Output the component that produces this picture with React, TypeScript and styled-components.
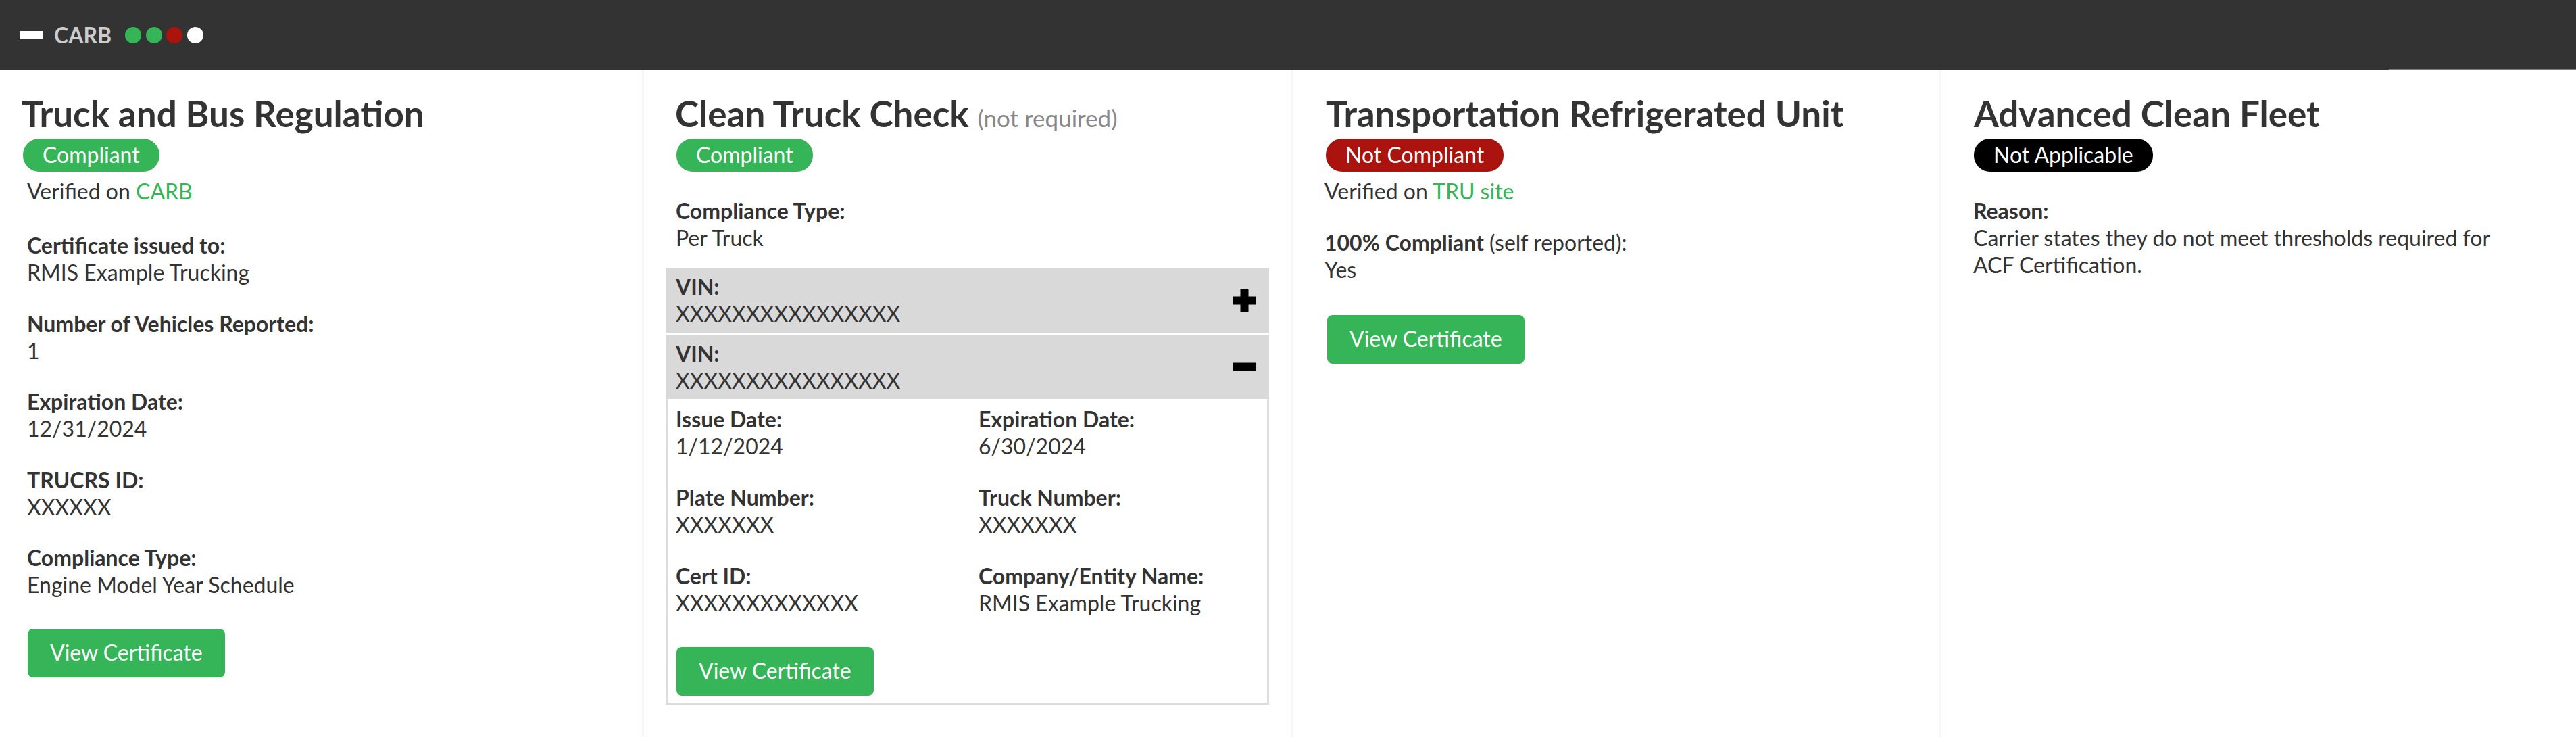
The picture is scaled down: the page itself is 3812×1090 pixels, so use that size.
import React from "react";
import styled, { createGlobalStyle } from "styled-components";

const GREEN = "#35b558";
const RED = "#ab130e";

const GlobalStyle = createGlobalStyle`
  html, body {
    margin: 0;
    background: #fff;
    color: #333;
    font-family: Lato, "Open Sans", sans-serif;
    font-size: 32px;
    line-height: 40px;
  }
  * { box-sizing: border-box; }
`;

const Page = styled.div`
  width: 3812px;
  height: 1090px;
  overflow: hidden;
`;

const TopBar = styled.header`
  position: relative;
  height: 103px;
  background: #333;
  display: flex;
  align-items: center;
  padding-left: 29px;
  color: #ccc;

  &::after {
    content: "";
    position: absolute;
    right: 0;
    bottom: 0;
    width: 277px;
    height: 1px;
    background: #7d7d7d;
  }
`;

const Dash = styled.span`
  width: 35px;
  height: 12px;
  background: #fff;
  margin-right: 16px;
`;

const BarTitle = styled.span`
  font-weight: 700;
  width: 105px;
`;

const Dots = styled.div`
  display: flex;
  gap: 6.6px;
`;

const Dot = styled.span<{ $color: string }>`
  width: 24px;
  height: 24px;
  border-radius: 50%;
  background: ${(p) => p.$color};
`;

const Columns = styled.div`
  display: grid;
  grid-template-columns: 950px 961px 959px 942px;
  height: 987px;
`;

const Column = styled.section<{ $left: number; $first?: boolean }>`
  padding: 37px 40px 0 ${(p) => p.$left}px;
  border-left: ${(p) => (p.$first ? "none" : "3px solid #f7f7f7")};
`;

const Title = styled.h3<{ $shift: number }>`
  margin: 0 0 9px ${(p) => p.$shift}px;
  font-size: 53px;
  line-height: 56px;
  font-weight: 700;
  white-space: nowrap;
`;

const TitleNote = styled.small`
  font-size: 35px;
  line-height: 1;
  font-weight: 400;
  color: #888;
`;

const Pill = styled.span<{ $bg: string; $shift: number }>`
  display: block;
  width: fit-content;
  height: 49px;
  line-height: 47px;
  padding: 0 29px;
  margin-left: ${(p) => p.$shift}px;
  border-radius: 24px;
  color: #fff;
  background: ${(p) => p.$bg};
  white-space: nowrap;
`;

const Verified = styled.p`
  margin: 9px 0 0;
`;

const GreenLink = styled.a`
  color: ${GREEN};
`;

const Field = styled.div<{ $top: number }>`
  margin-top: ${(p) => p.$top}px;
`;

const Label = styled.strong`
  display: block;
  font-weight: 700;
`;

const InlineLabel = styled.strong`
  font-weight: 700;
`;

const Value = styled.span`
  display: block;
`;

const CertButton = styled.a<{ $top: number; $shift?: number }>`
  display: block;
  width: fit-content;
  height: 72px;
  line-height: 70px;
  padding: 0 33px;
  margin: ${(p) => p.$top}px 0 0 ${(p) => p.$shift ?? 0}px;
  border-radius: 8px;
  background: ${GREEN};
  color: #fff;
  white-space: nowrap;
`;

const Accordion = styled.div`
  margin: 24px 0 0 -15px;
  width: 893px;
`;

const AccordionHead = styled.div<{ $open?: boolean }>`
  display: flex;
  align-items: center;
  justify-content: space-between;
  height: ${(p) => (p.$open ? 95 : 96)}px;
  margin-bottom: ${(p) => (p.$open ? 0 : 3)}px;
  padding: 0 19px 0 15px;
  background: #d9d9d9;
`;

const AccordionBody = styled.div`
  border: 3px solid #ddd;
  border-top: none;
  padding: 10px 12px 0;
  height: 452px;
`;

const DetailGrid = styled.div`
  display: grid;
  grid-template-columns: 448px 1fr;
  row-gap: 36px;
`;

const ToggleIcon = styled.svg`
  width: 35px;
  height: 35px;
  fill: #000;
  flex: none;
`;

const PlusIcon = () => (
  <ToggleIcon viewBox="0 0 35 35">
    <path d="M11.5 0h12v11.5h11.5v12h-11.5v11.5h-12v-11.5H0v-12h11.5z" />
  </ToggleIcon>
);

const MinusIcon = () => (
  <ToggleIcon viewBox="0 0 35 35">
    <path d="M0 11.5h35v12H0z" />
  </ToggleIcon>
);

const details = [
  ["Issue Date:", "1/12/2024"],
  ["Expiration Date:", "6/30/2024"],
  ["Plate Number:", "XXXXXXX"],
  ["Truck Number:", "XXXXXXX"],
  ["Cert ID:", "XXXXXXXXXXXXX"],
  ["Company/Entity Name:", "RMIS Example Trucking"],
];

const App: React.FC = () => (
  <Page>
    <GlobalStyle />
    <TopBar>
      <Dash />
      <BarTitle>CARB</BarTitle>
      <Dots>
        <Dot $color={GREEN} />
        <Dot $color={GREEN} />
        <Dot $color={RED} />
        <Dot $color="#fff" />
      </Dots>
    </TopBar>
    <Columns>
      <Column $left={40} $first>
        <Title $shift={-8}>Truck and Bus Regulation</Title>
        <Pill $bg={GREEN} $shift={-6}>Compliant</Pill>
        <Verified>
          Verified on <GreenLink>CARB</GreenLink>
        </Verified>
        <Field $top={40}>
          <Label>Certificate issued to:</Label>
          <Value>RMIS Example Trucking</Value>
        </Field>
        <Field $top={35.5}>
          <Label>Number of Vehicles Reported:</Label>
          <Value>1</Value>
        </Field>
        <Field $top={35.5}>
          <Label>Expiration Date:</Label>
          <Value>12/31/2024</Value>
        </Field>
        <Field $top={35.5}>
          <Label>TRUCRS ID:</Label>
          <Value>XXXXXX</Value>
        </Field>
        <Field $top={35.5}>
          <Label>Compliance Type:</Label>
          <Value>Engine Model Year Schedule</Value>
        </Field>
        <CertButton $top={45} $shift={1}>View Certificate</CertButton>
      </Column>
      <Column $left={47}>
        <Title $shift={-1}>
          Clean Truck Check <TitleNote>(not required)</TitleNote>
        </Title>
        <Pill $bg={GREEN} $shift={1}>Compliant</Pill>
        <Field $top={38}>
          <Label>Compliance Type:</Label>
          <Value>Per Truck</Value>
        </Field>
        <Accordion>
          <AccordionHead>
            <div>
              <Label>VIN:</Label>
              <Value>XXXXXXXXXXXXXXXX</Value>
            </div>
            <PlusIcon />
          </AccordionHead>
          <AccordionHead $open>
            <div>
              <Label>VIN:</Label>
              <Value>XXXXXXXXXXXXXXXX</Value>
            </div>
            <MinusIcon />
          </AccordionHead>
          <AccordionBody>
            <DetailGrid>
              {details.map(([label, value]) => (
                <div key={label}>
                  <Label>{label}</Label>
                  <Value>{value}</Value>
                </div>
              ))}
            </DetailGrid>
            <CertButton $top={45} $shift={1}>View Certificate</CertButton>
          </AccordionBody>
        </Accordion>
      </Column>
      <Column $left={46}>
        <Title $shift={2}>Transportation Refrigerated Unit</Title>
        <Pill $bg={RED} $shift={2}>Not Compliant</Pill>
        <Verified>
          Verified on <GreenLink>TRU site</GreenLink>
        </Verified>
        <Field $top={36}>
          <InlineLabel>100% Compliant</InlineLabel> (self reported):
          <Value>Yes</Value>
        </Field>
        <CertButton $top={47} $shift={4}>View Certificate</CertButton>
      </Column>
      <Column $left={47}>
        <Title $shift={1}>Advanced Clean Fleet</Title>
        <Pill $bg="#000" $shift={1}>Not Applicable</Pill>
        <Field $top={38}>
          <Label>Reason:</Label>
          <Value>
            Carrier states they do not meet thresholds required for
            <br />
            ACF Certification.
          </Value>
        </Field>
      </Column>
    </Columns>
  </Page>
);

export default App;
